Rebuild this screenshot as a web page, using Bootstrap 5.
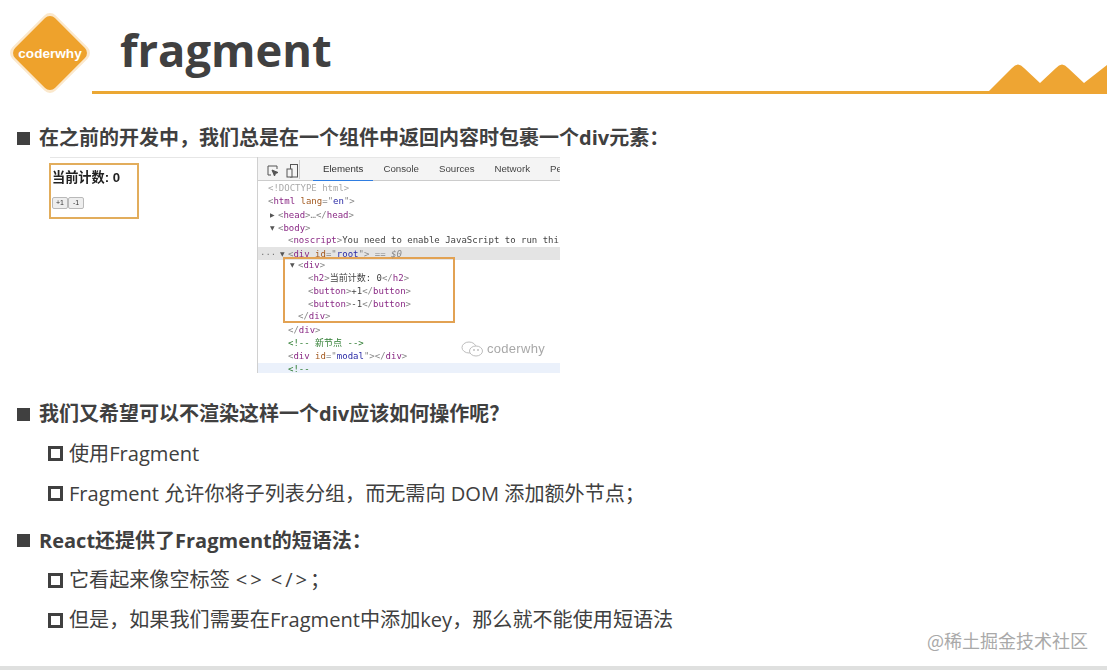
<!doctype html>
<html lang="zh-CN">
<head>
<meta charset="utf-8">
<title>fragment</title>
<link href="https://cdn.jsdelivr.net/npm/bootstrap@5.3.0/dist/css/bootstrap.min.css" rel="stylesheet">
<style>
html,body{height:670px;overflow:hidden;background:#fff}
body{font-family:"Open Sans","Noto Sans CJK SC",sans-serif;color:#404040;position:relative}
.slide-head{height:94px;position:relative}
.logo-mark{position:absolute;left:8px;top:11px;width:84px;height:84px}
.mountains{position:absolute;right:0;top:60px;width:118px;height:34px;overflow:visible}
.head-line{position:absolute;left:92px;right:0;top:91px;height:3px;background:#eba733}
.slide-title{font-size:45.3px;font-weight:700;line-height:1;margin:0;padding:27px 0 0 120px;color:#404040;font-family:"Open Sans",sans-serif}
.sq-solid{width:13px;height:13px;background:#404040;flex:none}
.sq-open{width:15px;height:15px;border:3px solid #404040;flex:none}
.lv1{font-weight:700;font-size:20px;line-height:26px;padding-left:17px;gap:9px}
.lv2{font-size:20.1px;line-height:28px;padding-left:48px;gap:6px}
.r1{margin-top:31px}
.r2{margin-top:28px}
.r3{margin-top:12px}
.r4{margin-top:12.5px}
.r5{margin-top:20px}
.shot{margin:6px 0 0 50px;width:510px;height:216px;font-size:9px;filter:blur(.35px)}
.shot-left{width:207px;border-top:1px solid #e6e6e6;padding:5px 0 0 0}
.count-box{width:90px;height:56px;border:2px solid #e2ad5c;padding:5px 0 0 1px;color:#222;margin-left:-1px}
.count-box b{display:block;font-size:13.2px;line-height:16px;font-family:"Liberation Sans","Noto Sans CJK SC",sans-serif}
.mini-btns{margin-top:11px;gap:0}
.mini-btn{width:16px;height:12px;border:1px solid #b9b9b9;background:#eee;border-radius:2px;font:7px/10px "Liberation Sans",sans-serif;text-align:center;color:#333}
.devtools{width:303px;border-left:1px solid #d0d0d0;overflow:hidden}
.dt-tabs{height:24px;background:#f4f4f4;border-bottom:1px solid #ccc;border-top:1px solid #e6e6e6;font:9.7px/22px "Liberation Sans",sans-serif;color:#444;white-space:nowrap}
.dt-icons{width:48px;padding:4px 0 0 8px;gap:7px;margin-right:13px;height:19px;border-right:1px solid #ccc;margin-top:2px}
.dt-tab{padding:0 10px;height:23px;flex:none}
.dt-tab.on{border-bottom:1px solid #2f7de1;color:#333}
.dt-code{font-family:"DejaVu Sans Mono","Noto Sans CJK SC",monospace;font-size:9px;line-height:13px;color:#888;white-space:nowrap;position:relative;padding-top:1px}
.cl{height:13px;padding-left:calc(var(--i) - 1px)}
.cl.sel{background:#e4e4e4}
.cl.hov{background:#ebf1fb}
.t{color:#8a2a85}.a{color:#a35a20}.v{color:#2a2aa6}.k{color:#444}.c{color:#2f7d32}
.tri{display:inline-block;width:8px;font-size:6px;color:#555;vertical-align:1px;font-family:"DejaVu Sans",sans-serif}
.hl-box{margin-left:25px;width:172px;border:2px solid #e2a253;height:66px;margin-top:-3px;margin-bottom:1px;line-height:12.85px}
.hl-box .cl{height:12.85px;padding-left:calc(var(--i) - 28px)}
.dots{position:absolute;left:2px;top:65px;color:#777}
.wm{position:absolute;right:15px;top:160px;gap:3px;font:13px/16px "Liberation Sans",sans-serif;color:#a8a8a8;letter-spacing:.3px}
.watermark{position:absolute;left:927px;top:630px;font-size:18px;line-height:20px;color:#a9a9a9;font-family:"Noto Sans CJK SC",sans-serif}
.foot-bar{position:absolute;left:0;right:0;top:666px;height:4px;background:#dfe0df}
.wide-sym{letter-spacing:3px;margin-left:6px}
</style>
</head>
<body>
<header class="slide-head">
  <svg class="logo-mark" viewBox="0 0 84 84"><rect x="11.400" y="11.400" width="61.200" height="61.200" rx="8" transform="rotate(45 42 42)" fill="#fbe8cc"/><rect x="13.800" y="13.800" width="56.400" height="56.400" rx="7" transform="rotate(45 42 42)" fill="#eea22c"/><text x="42" y="46.500" text-anchor="middle" font-family="Liberation Sans" font-weight="700" font-size="13.600" fill="#fff">coderwhy</text></svg>
  <h1 class="slide-title">fragment</h1>
  <div class="head-line"></div>
  <svg class="mountains" viewBox="0 0 118 34"><path d="M-3 34 L23 8 Q29 1 35 8 L51 23 L67 8 Q73 1 79 8 L95 23 L118 5 V34 Z" fill="#eea533"/></svg>
</header>

<div class="d-flex align-items-center lv1 r1"><span class="sq-solid"></span><span>在之前的开发中，我们总是在一个组件中返回内容时包裹一个div元素：</span></div>

<div class="shot d-flex">
  <div class="shot-left">
    <div class="count-box">
      <b>当前计数: 0</b>
      <div class="d-flex mini-btns"><span class="mini-btn">+1</span><span class="mini-btn">-1</span></div>
    </div>
  </div>
  <div class="devtools">
    <div class="dt-tabs d-flex">
      <div class="dt-icons d-flex">
        <svg width="13" height="13" viewBox="0 0 13 13" fill="none" stroke="#555"><path d="M5 11H2V2h9v3"/><path d="M6 6l6 2.5-2.5 1L8.500 12z" fill="#555"/></svg>
        <svg width="13" height="14" viewBox="0 0 13 14" fill="none" stroke="#555"><rect x="4.500" y=".5" width="7" height="12.500"/><rect x="1" y="5" width="5" height="8" fill="#f4f4f4"/></svg>
      </div>
      <span class="dt-tab on">Elements</span><span class="dt-tab">Console</span><span class="dt-tab">Sources</span><span class="dt-tab">Network</span><span class="dt-tab">Pe</span>
    </div>
    <div class="dt-code">
      <div class="cl" style="--i:11px;color:#aaa">&lt;!DOCTYPE html&gt;</div>
      <div class="cl" style="--i:11px">&lt;<span class="t">html</span> <span class="a">lang</span>="<span class="v">en</span>"&gt;</div>
      <div class="cl" style="--i:13px"><span class="tri">▶</span>&lt;<span class="t">head</span>&gt;…&lt;/<span class="t">head</span>&gt;</div>
      <div class="cl" style="--i:13px"><span class="tri">▼</span>&lt;<span class="t">body</span>&gt;</div>
      <div class="cl" style="--i:31px">&lt;<span class="t">noscript</span>&gt;<span class="k">You need to enable JavaScript to run thi</span></div>
      <div class="cl sel" style="--i:23px"><span class="tri">▼</span>&lt;<span class="t">div</span> <span class="a">id</span>="<span class="v">root</span>"&gt; == <i>$0</i></div>
      <div class="hl-box">
        <div class="cl" style="--i:33px"><span class="tri">▼</span>&lt;<span class="t">div</span>&gt;</div>
        <div class="cl" style="--i:51px">&lt;<span class="t">h2</span>&gt;<span class="k">当前计数: 0</span>&lt;/<span class="t">h2</span>&gt;</div>
        <div class="cl" style="--i:51px">&lt;<span class="t">button</span>&gt;<span class="k">+1</span>&lt;/<span class="t">button</span>&gt;</div>
        <div class="cl" style="--i:51px">&lt;<span class="t">button</span>&gt;<span class="k">-1</span>&lt;/<span class="t">button</span>&gt;</div>
        <div class="cl" style="--i:41px">&lt;/<span class="t">div</span>&gt;</div>
      </div>
      <div class="cl" style="--i:31px">&lt;/<span class="t">div</span>&gt;</div>
      <div class="cl" style="--i:31px"><span class="c">&lt;!-- 新节点 --&gt;</span></div>
      <div class="cl" style="--i:31px">&lt;<span class="t">div</span> <span class="a">id</span>="<span class="v">modal</span>"&gt;&lt;/<span class="t">div</span>&gt;</div>
      <div class="cl hov" style="--i:31px"><span class="c">&lt;!--</span></div>
      <span class="dots">...</span>
      <div class="wm d-flex align-items-center">
        <svg width="23" height="16" viewBox="0 0 23 16" fill="none" stroke="#b5b5b5" stroke-width=".9"><ellipse cx="8" cy="6.500" rx="7" ry="5.500"/><ellipse cx="15" cy="10" rx="6.500" ry="5" fill="#fff"/><circle cx="13" cy="9" r=".6"/><circle cx="17" cy="9" r=".6"/></svg>
        <span>coderwhy</span>
      </div>
    </div>
  </div>
</div>

<div class="d-flex align-items-center lv1 r2"><span class="sq-solid"></span><span>我们又希望可以不渲染这样一个div应该如何操作呢？</span></div>
<div class="d-flex align-items-center lv2 r4"><span class="sq-open"></span><span>使用Fragment</span></div>
<div class="d-flex align-items-center lv2 r3"><span class="sq-open"></span><span>Fragment 允许你将子列表分组，而无需向 DOM 添加额外节点；</span></div>
<div class="d-flex align-items-center lv1 r5"><span class="sq-solid"></span><span>React还提供了Fragment的短语法：</span></div>
<div class="d-flex align-items-center lv2 r4"><span class="sq-open"></span><span>它看起来像空标签<span class="wide-sym">&lt;&gt;</span><span class="wide-sym">&lt;/&gt;</span>；</span></div>
<div class="d-flex align-items-center lv2 r3"><span class="sq-open"></span><span>但是，如果我们需要在Fragment中添加key，那么就不能使用短语法</span></div>

<div class="watermark">@稀土掘金技术社区</div>
<div class="foot-bar"></div>
<script src="https://cdn.jsdelivr.net/npm/bootstrap@5.3.0/dist/js/bootstrap.bundle.min.js"></script>
</body>
</html>
